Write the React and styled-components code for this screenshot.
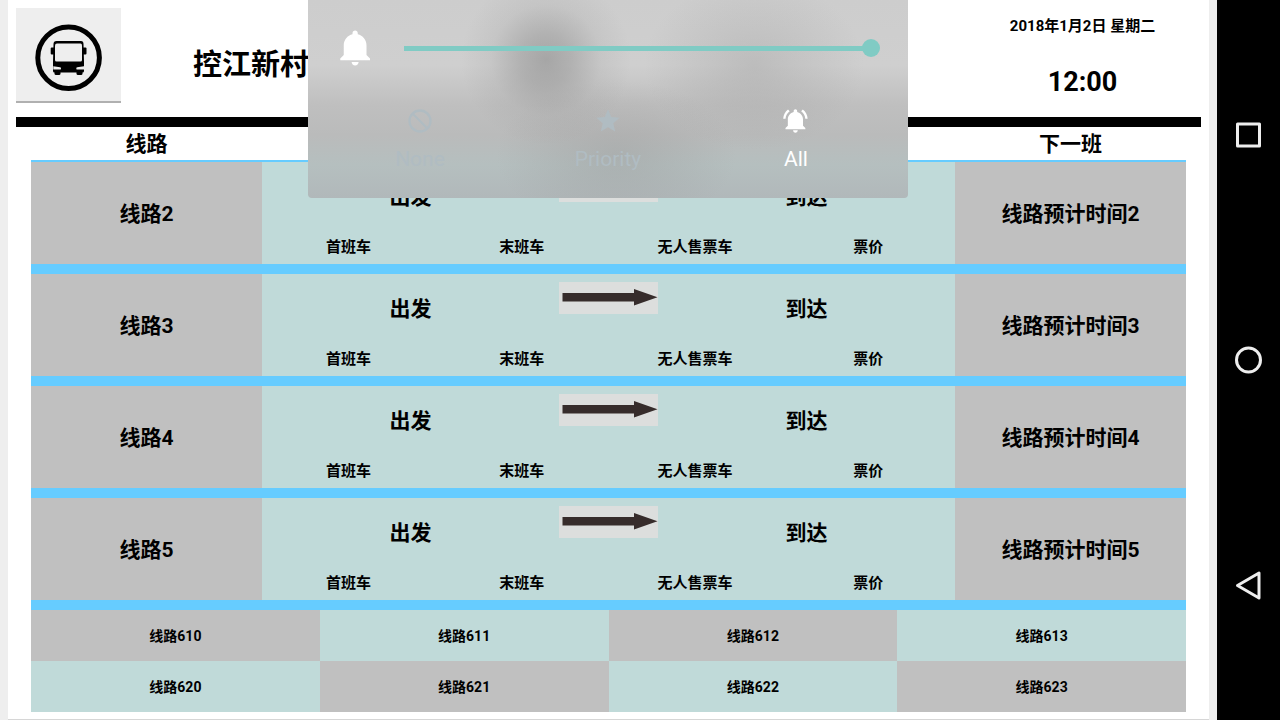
import React, { useState } from "react";
import styled, { createGlobalStyle } from "styled-components";

const GlobalStyle = createGlobalStyle`
  *, *::before, *::after { box-sizing: border-box; }
  body {
    margin: 0;
    background: #eee;
    color: #000;
    font-family: Roboto, "Noto Sans CJK SC", sans-serif;
  }
`;

const Device = styled.div`
  display: flex;
  min-height: 100vh;
`;

const Screen = styled.div`
  position: relative;
  flex: 1;
  min-width: 0;
  padding: 0 8px 1px;
`;

const Board = styled.main`
  padding: 0 8px 7px;
  background: #fff;
  box-shadow: 0 1px 0 #d6d6d6;
`;

const Header = styled.header`
  display: flex;
  height: 127px;
  border-bottom: 10px solid #000;
`;

const Logo = styled.svg`
  flex: none;
  width: 105px;
  height: 95px;
  margin-top: 8px;
  background: #eee;
  border-bottom: 2px solid #b0b0b0;
`;

const StationName = styled.h1`
  flex: 1;
  margin: 0;
  padding: 10px 0 0 72px;
  font-size: 29px;
  line-height: 110px;
`;

const Clock = styled.div`
  display: flex;
  flex-direction: column;
  width: 20%;
  text-align: center;
  font-weight: 700;
`;

const DateText = styled.div`
  padding-top: 14px;
  font-size: 15px;
  line-height: 24px;
`;

const TimeText = styled.time`
  padding-top: 28px;
  font-size: 27px;
  line-height: 32px;
`;

const Lines = styled.section`
  padding: 0 15px;
`;

const Table = styled.table`
  width: 100%;
  table-layout: fixed;
  border-collapse: separate;
  border-spacing: 0;
  text-align: center;
  font-weight: 700;
`;

const HeadCell = styled.th`
  width: ${(p) => p.$width};
  height: 35px;
  padding: 2px 0 0;
  border-bottom: 2px solid #6cf;
  font-size: 21px;
  line-height: 31px;
`;

const Cell = styled.td`
  padding: ${(p) => (p.$tone === "teal" ? "0" : "2px 0 0")};
  background: ${(p) => (p.$tone === "teal" ? "#c0dad9" : "#c0c0c0")};
  border-bottom: 10px solid #6cf;
  font-size: 21px;
  line-height: 30px;
`;

const SmallCell = styled.td`
  height: 51px;
  padding: 0;
  background: ${(p) => (p.$tone === "teal" ? "#c0dad9" : "#c0c0c0")};
  font-size: 14px;
  line-height: 20px;
`;

const Route = styled.div`
  display: grid;
  grid-template-rows: 68px 34px;
`;

const Stops = styled.div`
  display: grid;
  grid-template-columns: 3fr 1fr 3fr;
  align-items: center;
  padding-top: 2px;
`;

const Arrow = styled.svg`
  align-self: start;
  display: block;
  width: 100%;
  height: 32px;
  margin-top: 6px;
  background: #dcdedd;
`;

const Details = styled.div`
  display: grid;
  grid-template-columns: repeat(4, 1fr);
  align-items: center;
  font-size: 15px;
  line-height: 20px;
`;

const VolumePanel = styled.form`
  position: absolute;
  top: 0;
  left: 0;
  right: 1px;
  width: 600px;
  height: 198px;
  margin: 0 auto;
  padding: 27px 18px 0;
  border-radius: 0 0 4px 4px;
  background:
    radial-gradient(ellipse 85px 85px at 238px 60px, rgba(125, 125, 125, 0.5), rgba(130, 130, 130, 0.38) 30%, rgba(145, 145, 145, 0.14) 65%, rgba(150, 150, 150, 0)),
    radial-gradient(ellipse 110px 85px at 446px 65px, rgba(140, 140, 140, 0.28), rgba(145, 145, 145, 0.16) 45%, rgba(150, 150, 150, 0)),
    radial-gradient(ellipse 120px 75px at 308px 155px, rgba(150, 150, 150, 0.36), rgba(150, 150, 150, 0.2) 45%, rgba(160, 160, 160, 0)),
    linear-gradient(#cdcdcd, #cfcfcf 65px, #bfbfbf 105px, #babbbb 135px, #b5bfbf 165px, #b1b8ba);
`;

const SliderRow = styled.label`
  display: flex;
  align-items: center;
  height: 42px;
  padding: 0 10px 0 9px;
`;

const BellIcon = styled.svg`
  flex: none;
  width: 42px;
  height: 42px;
  margin-right: 27px;
  fill: #fff;
`;

const Slider = styled.input`
  appearance: none;
  flex: 1;
  min-width: 0;
  height: 18px;
  margin: 0;
  background: linear-gradient(#80cbc4, #80cbc4) left center / calc(100% - 9px) 5px no-repeat;

  &::-webkit-slider-thumb {
    appearance: none;
    width: 18px;
    height: 18px;
    border-radius: 50%;
    background: #80cbc4;
  }
`;

const Modes = styled.div`
  display: grid;
  grid-template-columns: repeat(3, 1fr);
  padding-top: 38px;
`;

const Mode = styled.label`
  position: relative;
  display: flex;
  flex-direction: column;
  align-items: center;
  gap: 12px;
  color: ${(p) => (p.$active ? "#fff" : "#b0bcc2")};
  font-size: 21px;
  line-height: 24px;

  svg {
    display: block;
    width: 28px;
    height: 28px;
    fill: currentColor;
  }
`;

const ModeRadio = styled.input`
  position: absolute;
  inset: 0;
  width: 100%;
  height: 100%;
  margin: 0;
  opacity: 0;
`;

const NavBar = styled.nav`
  position: sticky;
  top: 0;
  display: flex;
  flex-direction: column;
  width: 63px;
  height: 100vh;
  padding: 22px 0;
  background: #000;
`;

const NavButton = styled.button`
  display: grid;
  flex: 1;
  place-items: center;
  padding: 0;
  border: 0;
  background: none;

  svg {
    display: block;
    width: 32px;
    height: 32px;
    fill: none;
    stroke: #eee;
    stroke-width: 3;
    stroke-linejoin: round;
  }
`;

const BELL =
  "M11.5 22c1.1 0 2-.9 2-2h-4c0 1.1.9 2 2 2zm6.5-6v-5.5c0-3.07-2.13-5.64-5-6.32V3.5c0-.83-.67-1.5-1.5-1.5S10 2.67 10 3.5v.68c-2.87.68-5 3.25-5 6.32V16l-2 2v1h17v-1l-2-2z";
const BELL_WAVES =
  "M6.58 3.58L5.15 2.15C2.76 3.97 1.18 6.8 1.03 10h2c.15-2.65 1.51-4.97 3.55-6.42zM19.97 10h2c-.15-3.2-1.73-6.03-4.13-7.85l-1.43 1.43c2.05 1.45 3.41 3.77 3.56 6.42z";

const RingingBell = () => (
  <svg viewBox="0 0 24 24">
    <path d={BELL} />
    <path d={BELL_WAVES} />
  </svg>
);

const Star = () => (
  <svg viewBox="0 0 24 24">
    <path d="M12 17.270L18.180 21l-1.640-7.030L22 9.240l-7.190-.61L12 2 9.190 8.630 2 9.240l5.460 4.730L5.820 21z" />
  </svg>
);

const Blocked = () => (
  <svg viewBox="0 0 24 24">
    <circle cx="12" cy="12" r="9" fill="none" stroke="currentColor" strokeWidth="2" />
    <path d="M5.600 5.600L18.400 18.400" stroke="currentColor" strokeWidth="2" />
  </svg>
);

const BusLogo = () => (
  <Logo viewBox="0 0 105 93" role="img" aria-label="Bus">
    <circle cx="52.600" cy="49.800" r="30.800" fill="none" stroke="#000" strokeWidth="5" />
    <rect x="34.700" y="39.500" width="4" height="7" rx="1" />
    <rect x="66.500" y="39.500" width="4" height="7" rx="1" />
    <rect x="38.500" y="60" width="6" height="7" rx="1.500" />
    <rect x="60.500" y="60" width="6" height="7" rx="1.500" />
    <path d="M40.500 33h24.500q2.500 0 2.500 3l.5 18v9q0 1.500-1.500 1.500h-28q-1.500 0-1.500-1.500v-9l.5-18q0-3 3-3z" />
    <path d="M41 35.500h23.500q1.500 0 1.500 2v14.500q0 1.500-1.500 1.500H40.500q-1.500 0-1.500-1.500V37.500q0-2 2-2z" fill="#eee" />
    <path d="M37.300 58.200l6.700 1q1 0 1 1.200t-1 1.200h-6.700zM68 58.200l-6.700 1q-1 0-1 1.200t1 1.200H68z" fill="#eee" />
  </Logo>
);

const RouteArrow = () => (
  <Arrow viewBox="0 0 99 32" aria-hidden="true">
    <path d="M3.500 11H75V7l23.500 8.300L75 23.500V19.500H3.500z" fill="#362c2b" />
  </Arrow>
);

const lines = [2, 3, 4, 5];
const otherLines = [
  [610, 611, 612, 613],
  [620, 621, 622, 623],
];
const details = ["首班车", "末班车", "无人售票车", "票价"];
const modes = [
  { name: "None", icon: <Blocked /> },
  { name: "Priority", icon: <Star /> },
  { name: "All", icon: <RingingBell /> },
];

export default function App() {
  const [mode, setMode] = useState("All");

  return (
    <>
      <GlobalStyle />
      <Device>
        <Screen>
          <Board>
            <Header>
              <BusLogo />
              <StationName>控江新村</StationName>
              <Clock>
                <DateText>2018年1月2日 星期二</DateText>
                <TimeText>12:00</TimeText>
              </Clock>
            </Header>
            <Lines>
              <Table>
                <thead>
                  <tr>
                    <HeadCell $width="20%">线路</HeadCell>
                    <HeadCell $width="60%" as="td" />
                    <HeadCell $width="20%">下一班</HeadCell>
                  </tr>
                </thead>
                <tbody>
                  {lines.map((n) => (
                    <tr key={n}>
                      <Cell>线路{n}</Cell>
                      <Cell $tone="teal">
                        <Route>
                          <Stops>
                            <span>出发</span>
                            <RouteArrow />
                            <span>到达</span>
                          </Stops>
                          <Details>
                            {details.map((d) => (
                              <span key={d}>{d}</span>
                            ))}
                          </Details>
                        </Route>
                      </Cell>
                      <Cell>线路预计时间{n}</Cell>
                    </tr>
                  ))}
                </tbody>
              </Table>
              <Table>
                <tbody>
                  {otherLines.map((row, r) => (
                    <tr key={r}>
                      {row.map((n, c) => (
                        <SmallCell key={n} $tone={(r + c) % 2 ? "teal" : "gray"}>
                          线路{n}
                        </SmallCell>
                      ))}
                    </tr>
                  ))}
                </tbody>
              </Table>
            </Lines>
          </Board>
          <VolumePanel>
            <SliderRow>
              <BellIcon viewBox="0 0 24 24" role="img" aria-label="Volume">
                <path d={BELL} />
              </BellIcon>
              <Slider type="range" min="0" max="7" defaultValue="7" />
            </SliderRow>
            <Modes>
              {modes.map((m) => (
                <Mode key={m.name} $active={mode === m.name}>
                  <ModeRadio
                    type="radio"
                    name="mode"
                    checked={mode === m.name}
                    onChange={() => setMode(m.name)}
                  />
                  {m.icon}
                  {m.name}
                </Mode>
              ))}
            </Modes>
          </VolumePanel>
        </Screen>
        <NavBar>
          <NavButton type="button" aria-label="Recent apps">
            <svg viewBox="0 0 32 32">
              <rect x="4.500" y="5" width="22" height="22" />
            </svg>
          </NavButton>
          <NavButton type="button" aria-label="Home">
            <svg viewBox="0 0 32 32">
              <circle cx="15.500" cy="16" r="12" />
            </svg>
          </NavButton>
          <NavButton type="button" aria-label="Back">
            <svg viewBox="0 0 32 32">
              <path d="M4.500 16.500L26 4v25z" />
            </svg>
          </NavButton>
        </NavBar>
      </Device>
    </>
  );
}
